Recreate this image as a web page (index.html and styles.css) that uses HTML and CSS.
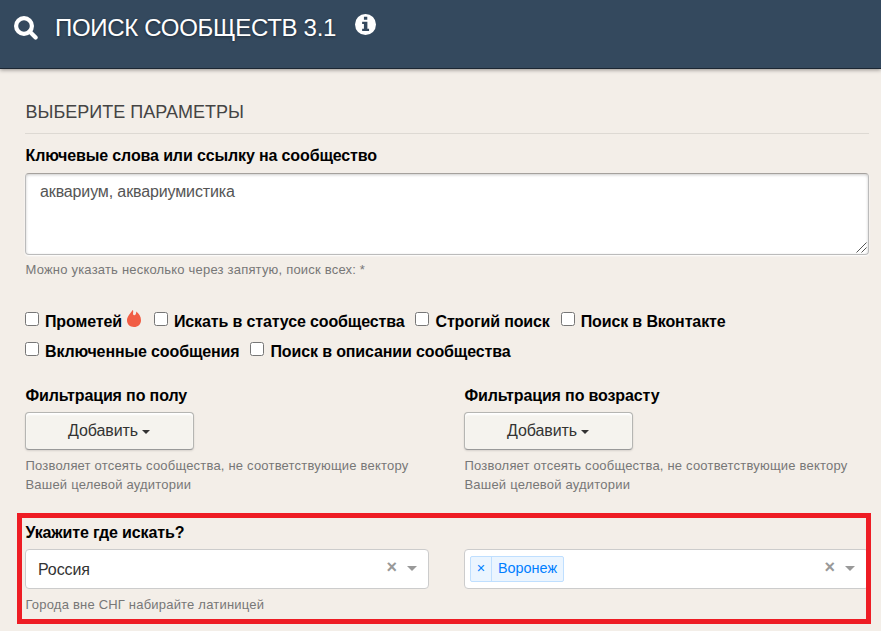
FILE: index.html
```html
<!DOCTYPE html>
<html lang="ru">
<head>
    <meta charset="UTF-8">
    <meta name="viewport" content="width=device-width, initial-scale=1.0">
    <title>Поиск сообществ</title>
    <link rel="stylesheet" href="styles.css">
</head>
<body>
    <header class="page-header">
        <svg class="icon-search" viewBox="0 0 24 24">
            <circle cx="10" cy="10" r="7.9"/>
            <path d="M15.6 15.6L21.6 21.6"/>
        </svg>
        <h1>ПОИСК СООБЩЕСТВ 3.1</h1>
        <svg class="icon-info" viewBox="0 0 20 20">
            <circle cx="10" cy="10" r="10"/>
            <path d="M8.500 2.500h3.200v3H8.500zM6.800 7.300h5v6.800h1.600V16.300H6.800v-2.200h1.700V9.500H6.800z"/>
        </svg>
    </header>

    <form class="search-form">
        <h2>ВЫБЕРИТЕ ПАРАМЕТРЫ</h2>

        <div class="form-group keywords">
            <label for="keywords">Ключевые слова или ссылку на сообщество</label>
            <div class="textarea-wrap">
                <textarea id="keywords" spellcheck="false">аквариум, аквариумистика</textarea>
                <svg class="grip" viewBox="0 0 11 11"><path d="M0.5 10.5L10.5 0.5M5.5 10.5L10.5 5.5"/></svg>
            </div>
            <p class="help-text">Можно указать несколько через запятую, поиск всех: *</p>
        </div>

        <div class="checks">
            <div class="check-row">
                <label class="check"><input type="checkbox"><span>Прометей</span>
                    <svg class="icon-fire" viewBox="0 0 14 17">
                        <path d="M7 17C3 17 0 14.200 0 10.500C0 6.500 3 4 5.600 0C6.400 0.400 6.300 1.200 6.100 2.600C5.900 4 6.100 5.300 7.300 5.300C8.700 5.300 9.300 3.600 9.200 1.600C12 3.600 14 6.700 14 10.200C14 14.200 11 17 7 17Z"/>
                    </svg>
                </label>
                <label class="check"><input type="checkbox"><span>Искать в статусе сообщества</span></label>
                <label class="check"><input type="checkbox"><span>Строгий поиск</span></label>
                <label class="check"><input type="checkbox"><span>Поиск в Вконтакте</span></label>
            </div>
            <div class="check-row">
                <label class="check"><input type="checkbox"><span>Включенные сообщения</span></label>
                <label class="check"><input type="checkbox"><span>Поиск в описании сообщества</span></label>
            </div>
        </div>

        <div class="form-row filters">
            <div class="form-group">
                <label>Фильтрация по полу</label>
                <button type="button" class="btn">Добавить <i class="caret"></i></button>
                <p class="help-text">Позволяет отсеять сообщества, не соответствующие вектору Вашей целевой аудитории</p>
            </div>
            <div class="form-group">
                <label>Фильтрация по возрасту</label>
                <button type="button" class="btn">Добавить <i class="caret"></i></button>
                <p class="help-text">Позволяет отсеять сообщества, не соответствующие вектору Вашей целевой аудитории</p>
            </div>
        </div>

        <div class="location">
            <label>Укажите где искать?</label>
            <div class="form-row">
                <div class="form-group">
                    <div class="select">
                        <span class="select-value">Россия</span>
                        <span class="select-clear">×</span>
                        <i class="select-arrow"></i>
                    </div>
                    <p class="help-text">Города вне СНГ набирайте латиницей</p>
                </div>
                <div class="form-group">
                    <div class="select">
                        <span class="tag"><span class="tag-remove">×</span><span class="tag-name">Воронеж</span></span>
                        <span class="select-clear">×</span>
                        <i class="select-arrow"></i>
                    </div>
                </div>
            </div>
            <div class="highlight"></div>
        </div>
    </form>
</body>
</html>
```
FILE: styles.css
```css
* {
    box-sizing: border-box;
}
body {
    margin: 0;
    height: 631px;
    overflow: hidden;
    background-color: #f3eee8;
    font-family: "Liberation Sans", Arial, sans-serif;
    font-size: 16px;
    color: #000;
}
.page-header {
    display: flex;
    align-items: flex-start;
    height: 69px;
    padding: 15px 14px 0;
    background-color: #34495e;
    border-bottom: 1px solid #1c2733;
    box-shadow: 0 1px 4px rgba(0, 0, 0, 0.4);
}
h1 {
    margin: -1px 19px 0 17px;
    font-size: 24px;
    font-weight: normal;
    line-height: 28px;
    letter-spacing: -0.3px;
    color: #fff;
    text-shadow: 0 1px 3px rgba(0, 0, 0, 0.4);
    white-space: nowrap;
}
.icon-search {
    width: 24px;
    height: 24px;
    margin-top: 1px;
    fill: none;
    stroke: #fff;
    stroke-width: 4.2;
    stroke-linecap: round;
}
.icon-info {
    width: 21px;
    height: 21px;
    margin-top: -1px;
    fill: #fff;
}
.icon-info path {
    fill: #34495e;
}
.search-form {
    padding: 31px 12px 0 25px;
}
h2 {
    margin: 0 0 13px;
    height: 34px;
    border-bottom: 1px solid #ddd9d3;
    font-size: 18px;
    font-weight: normal;
    line-height: 24px;
    text-indent: 0.5px;
    color: #444;
}
label {
    display: block;
    font-weight: bold;
    line-height: 18px;
    letter-spacing: -0.13px;
    text-indent: 0.5px;
}
textarea {
    display: block;
    width: 100%;
    height: 82px;
    padding: 8px 14px;
    border: 1px solid #bbb;
    border-top-color: #a5a19d;
    border-radius: 4px;
    box-shadow: inset 0 1px 3px rgba(0, 0, 0, 0.2), 0 1px 2px #fff;
    font-family: inherit;
    font-size: 16px;
    line-height: 20px;
    letter-spacing: -0.13px;
    color: #555;
    resize: none;
}
.textarea-wrap {
    position: relative;
    margin-top: 8px;
}
.grip {
    position: absolute;
    right: 2px;
    bottom: 2px;
    width: 11px;
    height: 11px;
    fill: none;
    stroke: #555;
}
.help-text {
    margin: 6px 0 0;
    padding-left: 0.5px;
    font-size: 13px;
    line-height: 19px;
    letter-spacing: 0.2px;
    color: #777;
}
.keywords {
    height: 164px;
}
.keywords .help-text {
    margin-top: 5px;
}
.check-row {
    display: flex;
    gap: 11px;
    height: 30px;
}
.check {
    display: flex;
    align-items: flex-start;
    white-space: nowrap;
    text-indent: 0;
}
.check input {
    width: 14px;
    height: 14px;
    margin: 1px 6px 0 0;
}
.check span {
    margin-top: 2px;
}
.icon-fire {
    width: 14px;
    height: 17px;
    margin: -1px 2px 0 5px;
    fill: #f15d44;
}
.form-row {
    display: grid;
    grid-template-columns: 404px 405px;
    column-gap: 35px;
}
.filters {
    margin-top: 16px;
    height: 137px;
}
.btn {
    display: flex;
    align-items: center;
    justify-content: center;
    width: 169px;
    height: 38px;
    margin-top: 7px;
    padding: 0 1px 0 0;
    border: 1px solid #b5b5b2;
    border-bottom-color: #999;
    border-radius: 4px;
    background-color: #f5f3ee;
    box-shadow: inset 0 2px 2px #fff, 0 1px 2px rgba(0, 0, 0, 0.12);
    font-family: inherit;
    font-size: 16px;
    letter-spacing: -0.08px;
    color: #333;
}
.caret {
    margin: 2px 0 0 4px;
    border: 4px solid transparent;
    border-top-color: #333;
    border-bottom: 0;
}
.location {
    position: relative;
}
.select {
    display: flex;
    align-items: center;
    height: 40px;
    margin-top: 7px;
    padding: 0 11px 0 12px;
    border: 1px solid #ccc;
    border-radius: 4px;
    background-color: #fff;
    color: #333;
}
.form-group + .form-group .select {
    padding-right: 13px;
}
.select-value {
    margin-top: 1px;
    letter-spacing: -0.1px;
}
.select-clear {
    margin: -4px 10px 0 auto;
    font-size: 18px;
    font-weight: bold;
    line-height: 20px;
    color: #999;
}
.select-arrow {
    margin-top: -1px;
    border: 5.5px solid transparent;
    border-top-color: #999;
    border-bottom: 0;
}
.tag {
    display: flex;
    height: 26px;
    margin-left: -7px;
    margin-top: -1px;
    border: 1px solid #bfdfff;
    border-radius: 2px;
    background-color: #ebf5ff;
    color: #007eff;
    font-size: 14.4px;
    line-height: 23px;
}
.tag-remove {
    width: 21px;
    border-right: 1px solid #bfdfff;
    text-align: center;
}
.tag-name {
    padding: 0 6px;
}
/* frame drawn over the location block */
.highlight {
    position: absolute;
    top: -11px;
    left: -8px;
    width: 854px;
    height: 111px;
    border: 5px solid #ee1c24;
    pointer-events: none;
}
```
